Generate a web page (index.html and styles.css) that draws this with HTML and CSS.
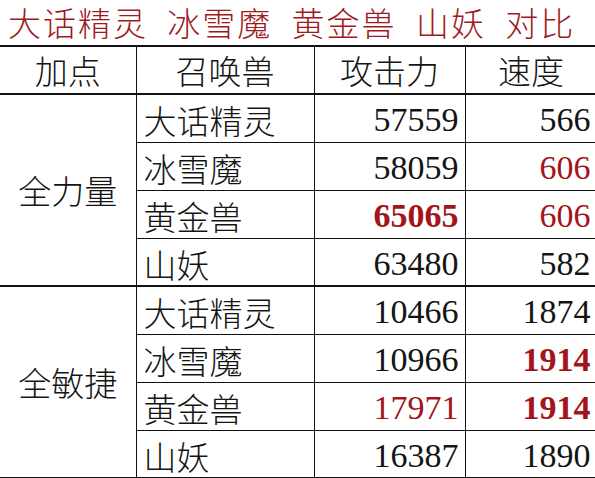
FILE: index.html
```html
<!DOCTYPE html>
<html lang="zh">
<head>
<meta charset="utf-8">
<title>对比</title>
<link rel="stylesheet" href="styles.css">
</head>
<body>
<div class="page">
  <h1 class="title">大话精灵 冰雪魔 黄金兽 山妖 对比</h1>
  <table class="grid">
    <colgroup>
      <col class="c1"><col class="c2"><col class="c3"><col class="c4">
    </colgroup>
    <thead>
      <tr class="head">
        <th>加点</th><th>召唤兽</th><th>攻击力</th><th>速度</th>
      </tr>
    </thead>
    <tbody class="group">
      <tr>
        <td class="stat" rowspan="4">全力量</td>
        <td class="name">大话精灵</td><td class="num">57559</td><td class="num">566</td>
      </tr>
      <tr><td class="name">冰雪魔</td><td class="num">58059</td><td class="num red">606</td></tr>
      <tr><td class="name">黄金兽</td><td class="num red bold">65065</td><td class="num red">606</td></tr>
      <tr><td class="name">山妖</td><td class="num">63480</td><td class="num">582</td></tr>
    </tbody>
    <tbody class="group">
      <tr>
        <td class="stat" rowspan="4">全敏捷</td>
        <td class="name">大话精灵</td><td class="num">10466</td><td class="num">1874</td>
      </tr>
      <tr><td class="name">冰雪魔</td><td class="num">10966</td><td class="num red bold">1914</td></tr>
      <tr><td class="name">黄金兽</td><td class="num red">17971</td><td class="num red bold">1914</td></tr>
      <tr><td class="name">山妖</td><td class="num">16387</td><td class="num">1890</td></tr>
    </tbody>
  </table>
</div>
</body>
</html>
```

FILE: styles.css
```css
html, body {
  margin: 0;
  padding: 0;
  background: #ffffff;
  overflow: hidden;
}
.page {
  width: 600px;
  font-family: "Noto Sans CJK SC", "Noto Sans CJK JP", sans-serif;
  color: #141414;
}
.title {
  margin: 0;
  height: 45px;
  line-height: 45px;
  padding-left: 8px;
  font-size: 33px;
  font-weight: 300;
  letter-spacing: 2px;
  word-spacing: 10px;
  color: #9e1a20;
  white-space: nowrap;
}
.grid {
  border-collapse: collapse;
  table-layout: fixed;
  width: 597px;
  border-top: 2px solid #111;
}
.c1 { width: 136px; }
.c2 { width: 178px; }
.c3 { width: 151px; }
.c4 { width: 132px; }
.grid th, .grid td {
  padding: 0;
  height: 48px;
  border-left: 1px solid #111;
  border-right: 1px solid #111;
  border-bottom: 1px solid #111;
  font-size: 33px;
  font-weight: 300;
  line-height: 40px;
  white-space: nowrap;
  box-sizing: border-box;
  vertical-align: middle;
}
.grid th:first-child, .grid td.stat {
  border-left: none;
}
.head th {
  text-align: center;
  border-bottom: 2px solid #111;
  height: 48px;
}
.group tr:last-child td,
.group td.stat {
  border-bottom: 2px solid #111;
}
.stat {
  text-align: center;
}
.name {
  padding-left: 7px !important;
  text-align: left;
  padding-top: 4px !important;
}
.num {
  text-align: right;
  padding-right: 6px !important;
  padding-top: 4px !important;
  font-family: "Liberation Serif", "Times New Roman", serif;
  font-size: 34px !important;
  font-weight: 400 !important;
}
.red { color: #a3141b; }
.bold { font-weight: 700 !important; }
```
